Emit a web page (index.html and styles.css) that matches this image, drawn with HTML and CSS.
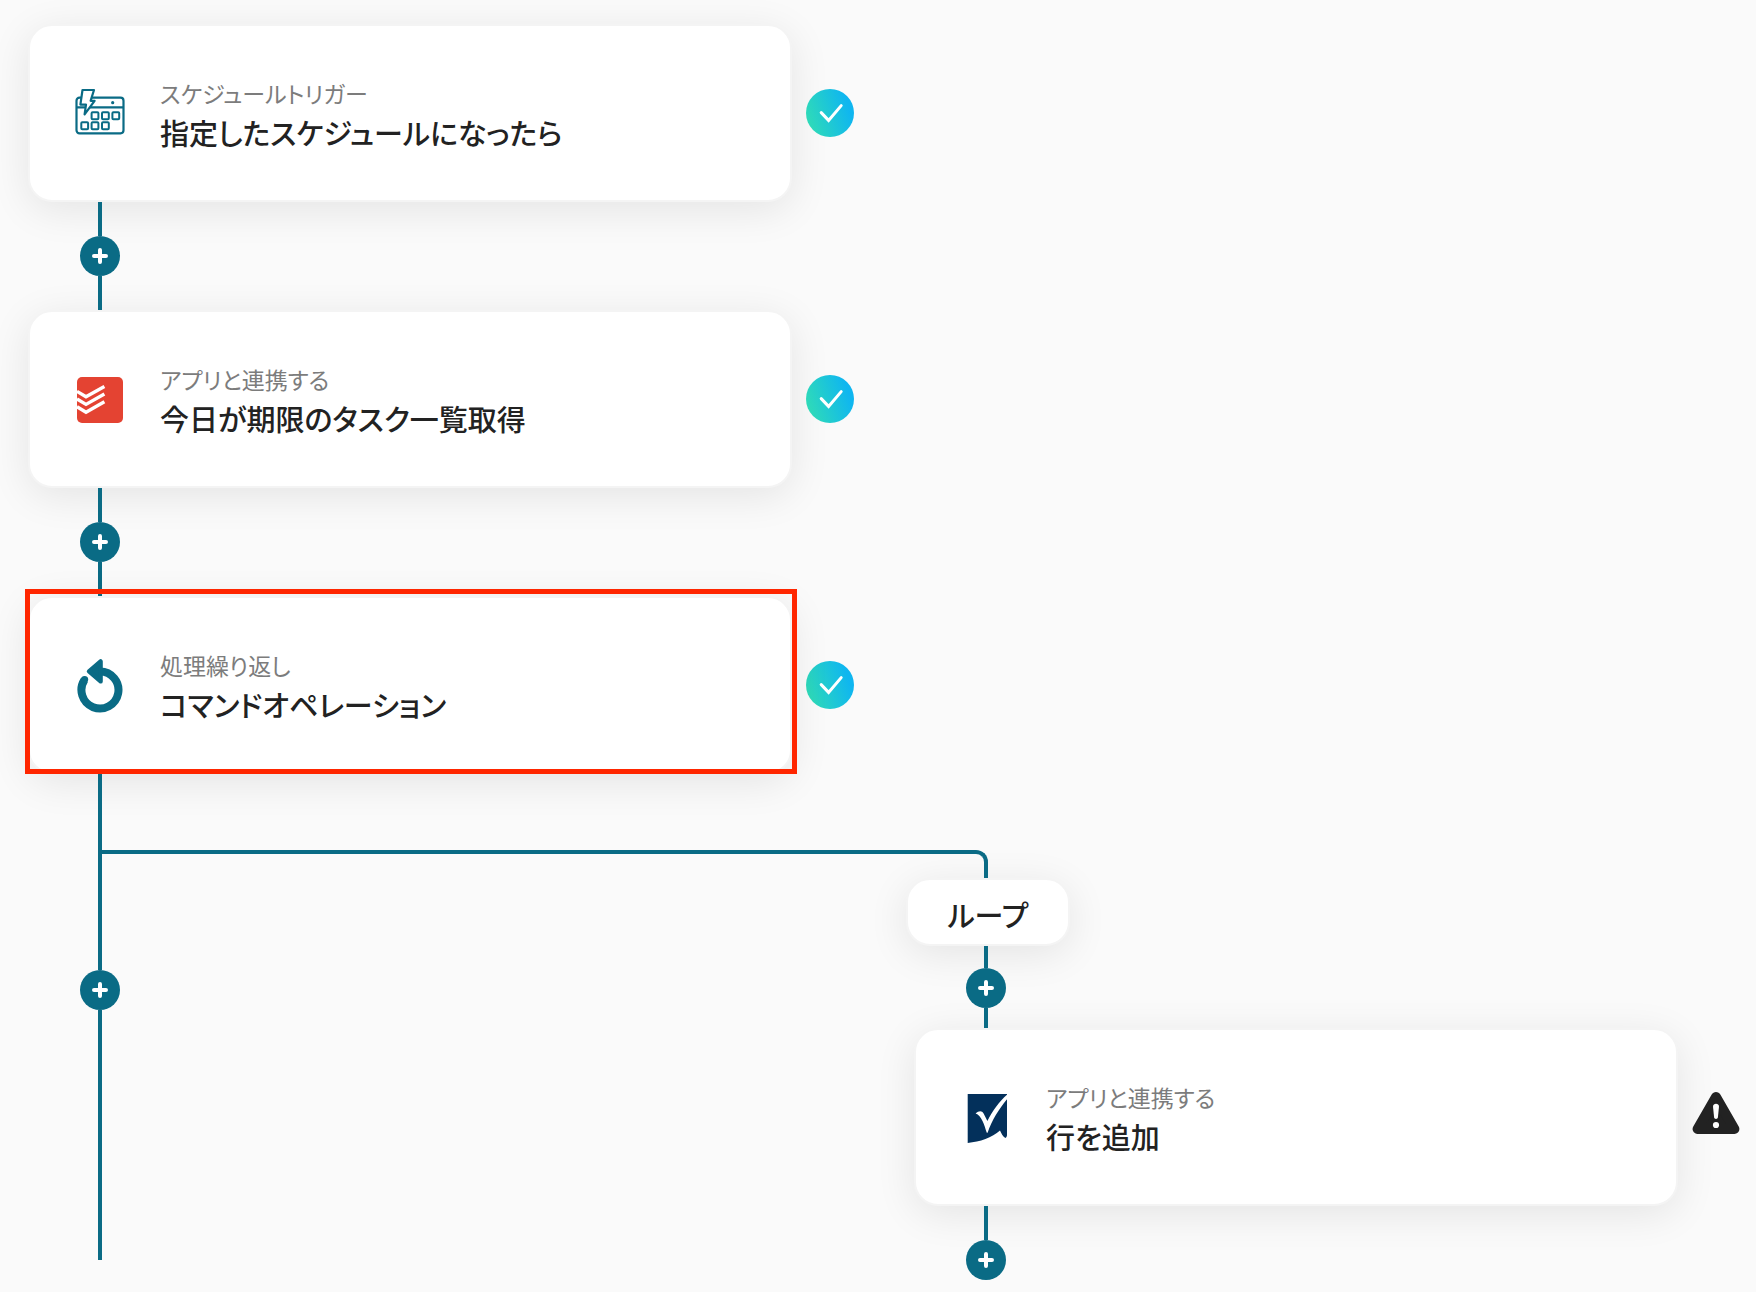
FILE: index.html
```html
<!DOCTYPE html>
<html lang="ja">
<head>
  <meta charset="UTF-8">
  <title>フロー</title>
  <link rel="stylesheet" href="styles.css">
</head>
<body>

  <!-- Shared icons -->
  <svg class="defs" width="0" height="0" aria-hidden="true">
    <defs>
      <linearGradient id="done" x1="0" y1="0.7" x2="0.9" y2="0.4">
        <stop offset="0" stop-color="#30dcb6"/>
        <stop offset="1" stop-color="#0fb6f0"/>
      </linearGradient>
      <symbol id="check" viewBox="0 0 48 48">
        <circle cx="24" cy="24" r="24" fill="url(#done)"/>
        <path d="M15.2 23.6L22.6 31.4L35.2 16.6" fill="none" stroke="#fff" stroke-width="3" stroke-linecap="round"/>
      </symbol>
      <symbol id="plus" viewBox="0 0 16 16">
        <path d="M8 2V14M2 8H14" stroke="#fff" stroke-width="4" stroke-linecap="round"/>
      </symbol>
    </defs>
  </svg>

  <main class="flow">

    <!-- Trigger -->
    <div class="step">
      <section class="card">
        <svg class="card-icon" viewBox="0 0 56 56" fill="none" stroke="#0a6b85" stroke-width="2.2">
          <rect x="4.5" y="12.7" width="47" height="35.6" rx="3"/>
          <path d="M4.5 22.4H51.5"/>
          <circle cx="40.7" cy="17.7" r="1.6" fill="#0a6b85" stroke="none"/>
          <g stroke-width="2">
            <rect x="19.6" y="27.2" width="6.8" height="7" rx="1"/>
            <rect x="30" y="27.2" width="6.8" height="7" rx="1"/>
            <rect x="40.4" y="27.2" width="6.8" height="7" rx="1"/>
            <rect x="9.3" y="37.2" width="6.8" height="7" rx="1"/>
            <rect x="19.6" y="37.2" width="6.8" height="7" rx="1"/>
            <rect x="30" y="37.2" width="6.8" height="7" rx="1"/>
          </g>
          <path d="M10.5 5H22L18.6 15.8H22.6L12.6 29.4L14 19.6H8.4Z" fill="#fff" stroke-linejoin="round"/>
        </svg>
        <div class="card-body">
          <p class="card-label">スケジュールトリガー</p>
          <h2 class="card-title">指定したスケジュールになったら</h2>
        </div>
      </section>
      <svg class="status" role="img" aria-label="完了"><use href="#check"/></svg>
    </div>

    <div class="connector">
      <button class="add" type="button" aria-label="追加"><svg><use href="#plus"/></svg></button>
    </div>

    <!-- Todoist -->
    <div class="step">
      <section class="card">
        <svg class="card-icon" viewBox="0 0 56 56">
          <rect x="5" y="6" width="46" height="46" rx="5" fill="#e44332"/>
          <path d="M5 20.4L14 25.8L32.4 15.4M5 28L14 33.4L32.4 23M5 35.8L14 41.2L32.4 30.8" fill="none" stroke="#fff" stroke-width="3.4"/>
        </svg>
        <div class="card-body">
          <p class="card-label">アプリと連携する</p>
          <h2 class="card-title">今日が期限のタスク一覧取得</h2>
        </div>
      </section>
      <svg class="status" role="img" aria-label="完了"><use href="#check"/></svg>
    </div>

    <div class="connector">
      <button class="add" type="button" aria-label="追加"><svg><use href="#plus"/></svg></button>
    </div>

    <!-- Repeat -->
    <div class="step">
      <section class="card marked">
        <svg class="card-icon" viewBox="0 0 56 56">
          <path d="M28 14.5A18.5 18.5 0 1 1 12.4 23" fill="none" stroke="#0a6b85" stroke-width="8"/>
          <circle cx="12.6" cy="22.6" r="3.6" fill="#0a6b85"/>
          <path d="M17 14.4L28.6 4.4V24.4Z" fill="#0a6b85" stroke="#0a6b85" stroke-width="4.4" stroke-linejoin="round"/>
        </svg>
        <div class="card-body">
          <p class="card-label">処理繰り返し</p>
          <h2 class="card-title">コマンドオペレーション</h2>
        </div>
      </section>
      <svg class="status" role="img" aria-label="完了"><use href="#check"/></svg>
    </div>

    <!-- Trunk on the left, loop on the right -->
    <div class="branch">
      <div class="connector trunk">
        <button class="add" type="button" aria-label="追加"><svg><use href="#plus"/></svg></button>
      </div>

      <div class="loop">
        <div class="elbow"></div>
        <div class="loop-body">
          <h3 class="pill">ループ</h3>
          <div class="loop-steps">
            <div class="connector short">
              <button class="add" type="button" aria-label="追加"><svg><use href="#plus"/></svg></button>
            </div>
            <div class="step">
              <section class="card">
                <svg class="card-icon" viewBox="0 0 56 56">
                  <path d="M9.7 5H49V46C49 47.5 48.4 48.4 47.4 49C45 48 43.4 44.6 42 41.6C34 48.6 22 53 9.7 54Z" fill="#03305b"/>
                  <path d="M17.6 24.4C21 21.4 24 21.6 25.6 24.6L29.4 32C35 21 41 13 49.2 5.4V10C41 20 34 31 29.6 43.8H28.8C26.4 36 23.6 26.4 17.6 24.4Z" fill="#fff"/>
                </svg>
                <div class="card-body">
                  <p class="card-label">アプリと連携する</p>
                  <h2 class="card-title">行を追加</h2>
                </div>
              </section>
              <svg class="status warning" viewBox="0 0 48 48" role="img" aria-label="警告">
                <path d="M24 8L5.6 40H42.4Z" fill="#222" stroke="#222" stroke-width="10" stroke-linejoin="round"/>
                <path d="M21 17.6C21 13.8 27 13.8 27 17.6L25.9 28.6C25.6 30.4 22.4 30.4 22.1 28.6Z" fill="#fff"/>
                <circle cx="24" cy="36" r="3.1" fill="#fff"/>
              </svg>
            </div>
            <div class="connector last">
              <button class="add" type="button" aria-label="追加"><svg><use href="#plus"/></svg></button>
            </div>
          </div>
        </div>
      </div>
    </div>

  </main>

</body>
</html>
```

FILE: styles.css
```css
:root {
  --line: #0a6b85;
  --card-width: 764px;
}
* {
  box-sizing: border-box;
}
body {
  margin: 0;
  background-color: #fafafa;
  color: #222;
  font-family: "Noto Sans CJK JP", "Noto Sans", sans-serif;
  font-feature-settings: "palt";
}
.defs {
  position: absolute;
}
h2, h3, p {
  margin: 0;
}
.flow {
  padding: 24px 0 12px 28px;
}

/* Cards */
.step {
  display: flex;
  align-items: center;
  gap: 14px;
}
.card {
  display: flex;
  align-items: center;
  gap: 32px;
  width: var(--card-width);
  height: 178px;
  padding: 0 42px;
  background-color: #fff;
  border: 2px solid #f4f4f4;
  border-radius: 24px;
  box-shadow: 0 8px 40px rgba(0, 0, 0, 0.09);
}
.card-icon {
  flex: none;
  width: 56px;
  height: 56px;
}
.card-body {
  padding-top: 6px;
}
.card-label {
  font-size: 23px;
  line-height: 32px;
  color: #7c7c7c;
  font-weight: 400;
}
.card-title {
  font-size: 29px;
  line-height: 46px;
  font-weight: 500;
}
.status {
  flex: none;
  width: 48px;
  height: 48px;
}
.warning {
  margin-bottom: 8px;
}

/* Red frame over the highlighted card */
.marked {
  position: relative;
  z-index: 2;
}
.marked::after {
  content: "";
  position: absolute;
  top: -9px;
  right: -7px;
  bottom: -2px;
  left: -5px;
  border: 5px solid #ff2600;
}

/* Vertical lines with the add button */
.connector {
  position: relative;
  z-index: 1;
  display: flex;
  flex-direction: column;
  align-items: center;
  width: 40px;
  margin-left: 52px;
}
.connector::before,
.connector::after {
  content: "";
  width: 4px;
  height: 34px;
  background-color: var(--line);
}
.add {
  display: flex;
  align-items: center;
  justify-content: center;
  width: 40px;
  height: 40px;
  padding: 0;
  border: none;
  border-radius: 50%;
  background-color: var(--line);
  cursor: pointer;
}
.add svg {
  width: 16px;
  height: 16px;
}
.short::before {
  height: 22px;
}
.short::after {
  height: 20px;
}
.last::after {
  display: none;
}

/* Branch */
.branch {
  position: relative;
  z-index: 3;
  display: flex;
  align-items: flex-start;
}
.trunk {
  flex: none;
}
.trunk::before {
  height: 196px;
}
.trunk::after {
  height: 250px;
}
.loop {
  flex: 1;
  margin-top: 76px;
  margin-left: -20px;
}
.elbow {
  position: relative;
  z-index: 1;
  width: calc(var(--card-width) + 124px);
  height: 28px;
  border-top: 4px solid var(--line);
  border-right: 4px solid var(--line);
  border-top-right-radius: 12px;
}
.loop-body {
  padding-left: calc(var(--card-width) + 42px);
}
.pill {
  width: 164px;
  padding: 11px 0 7px;
  background-color: #fff;
  border: 2px solid #f4f4f4;
  border-radius: 24px;
  box-shadow: 0 8px 40px rgba(0, 0, 0, 0.09);
  text-align: center;
  font-size: 29px;
  line-height: 46px;
  font-weight: 500;
}
.loop-steps {
  padding-left: 8px;
}
```
